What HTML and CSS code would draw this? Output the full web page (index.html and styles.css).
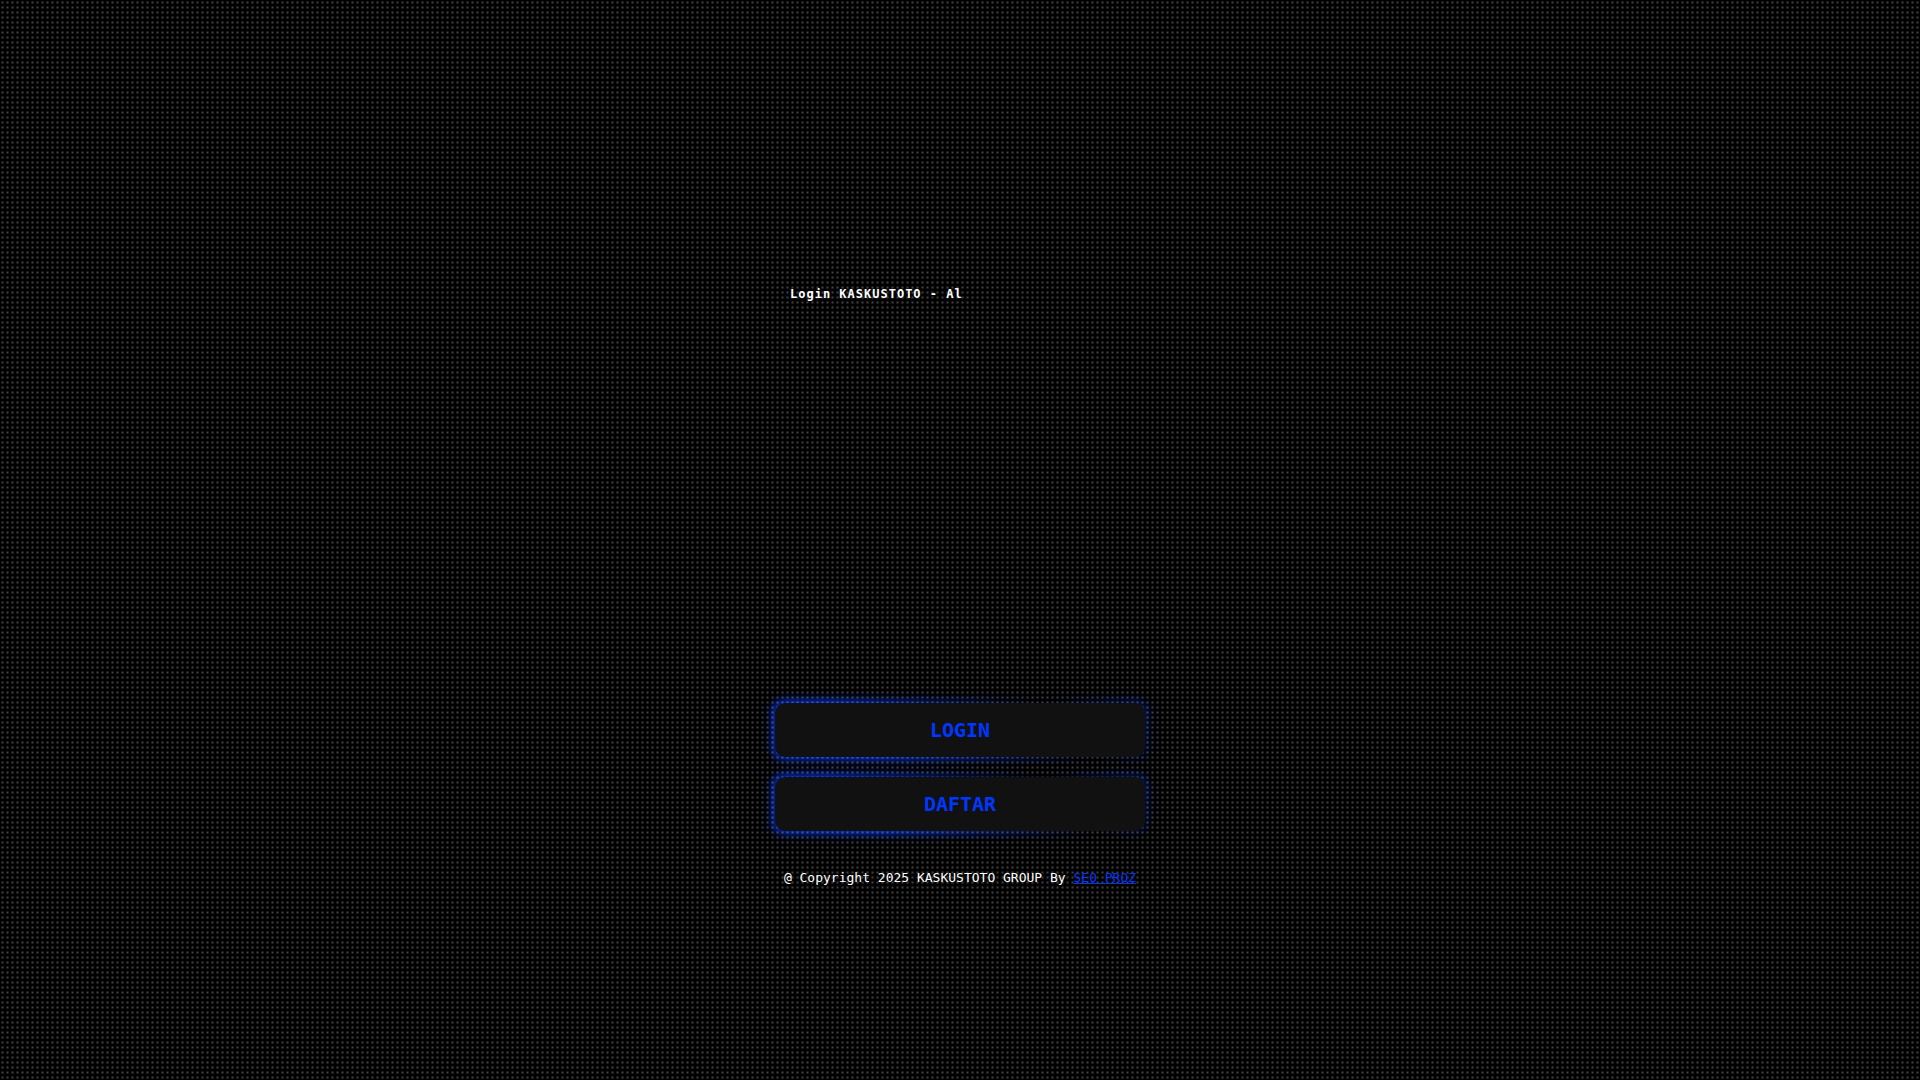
FILE: index.html
```html
<!DOCTYPE html>
<html lang="id">
<head>
    <meta charset="UTF-8">
    <meta name="viewport" content="width=device-width, initial-scale=1.0">
    <title>Login KASKUSTOTO</title>
    <link rel="stylesheet" href="styles.css">
</head>
<body>
    <main class="page">
        <div class="content">
            <h1 class="title">Login KASKUSTOTO - Al</h1>
            <div class="banner"></div>
            <nav class="links">
                <a href="#login" class="button">LOGIN</a>
                <a href="#daftar" class="button">DAFTAR</a>
            </nav>
            <footer class="copyright">@ Copyright 2025 KASKUSTOTO GROUP By <a href="#seo">SEO PROZ</a></footer>
        </div>
    </main>
</body>
</html>
```

FILE: styles.css
```css
* {
    box-sizing: border-box;
}
body {
    margin: 0;
    background-color: #000;
    color: #fff;
    font-family: "DejaVu Sans Mono", monospace;
}
/* dotted layer, the button glow shines through from below */
.page {
    min-height: 100vh;
    padding: 285px 20px 20px;
    background-image: radial-gradient(rgba(255, 255, 255, 0.26), transparent 2px);
    background-size: 5px 5px;
}
.content {
    max-width: 370px;
    margin: 0 auto;
}
.title {
    margin: 0;
    padding: 0 15px;
    font-size: 12px;
    line-height: 18px;
    letter-spacing: 1px;
    white-space: nowrap;
}
.banner {
    height: 400px;
}
.links {
    display: grid;
    gap: 20px;
}
.button {
    position: relative;
    padding: 15px;
    border-radius: 10px;
    background-color: #111;
    color: #0037ff;
    font-size: 20px;
    font-weight: bold;
    line-height: 24px;
    text-align: center;
    text-decoration: none;
}
.button::before {
    content: "";
    position: absolute;
    inset: -2px;
    z-index: -1;
    border-radius: 10px;
    background: linear-gradient(45deg, #002fda 0%, #0037ff 25%, #000 75%, #0030e0 120%);
    filter: blur(5px);
}
.copyright {
    margin-top: 37px;
    font-size: 13px;
    line-height: 20px;
    text-align: center;
    white-space: nowrap;
}
.copyright a {
    color: #0037ff;
}
```
